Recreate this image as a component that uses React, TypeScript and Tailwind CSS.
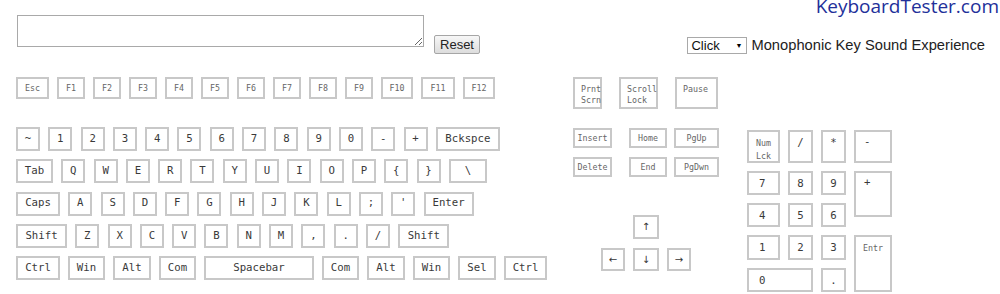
import type { ReactNode } from 'react'

/**
 * KeyboardTester page
 *
 * Text box with Reset, sound picker, and the full on-screen keyboard:
 * main block, navigation cluster and numeric keypad.
 */

type KeyDef = [string, string]

const mainText = "font-['DejaVu_Sans_Mono',monospace] text-[10.7px] text-[#3a3a3a]"
const smallText = "font-['DejaVu_Sans_Mono',monospace] text-[8.3px] text-[#666]"

const fRow: KeyDef[] = [
  ['Esc', 'w-[33px]'],
  ['F1', 'w-[28px]'],
  ['F2', 'w-[28px]'],
  ['F3', 'w-[28px]'],
  ['F4', 'w-[28px]'],
  ['F5', 'w-[28px]'],
  ['F6', 'w-[28px]'],
  ['F7', 'w-[28px]'],
  ['F8', 'w-[28px]'],
  ['F9', 'w-[28px]'],
  ['F10', 'w-[32px]'],
  ['F11', 'w-[34px]'],
  ['F12', 'w-[32px]'],
]

const single = (chars: string[]): KeyDef[] => chars.map((c) => [c, 'w-[24px]'])

const numberRow: KeyDef[] = [
  ...single(['~', '1', '2', '3', '4', '5', '6', '7', '8', '9', '0', '-', '+']),
  ['Bckspce', 'w-[64px]'],
]

const qwertyRow: KeyDef[] = [
  ['Tab', 'w-[37px]'],
  ...single(['Q', 'W', 'E', 'R', 'T', 'Y', 'U', 'I', 'O', 'P', '{', '}']),
  ['\\', 'w-[38px]'],
]

const homeRow: KeyDef[] = [
  ['Caps', 'w-[44px]'],
  ...single(['A', 'S', 'D', 'F', 'G', 'H', 'J', 'K', 'L', ';', "'"]),
  ['Enter', 'w-[50px]'],
]

const shiftRow: KeyDef[] = [
  ['Shift', 'w-[51px]'],
  ...single(['Z', 'X', 'C', 'V', 'B', 'N', 'M', ',', '.', '/']),
  ['Shift', 'w-[51px]'],
]

const bottomRow: KeyDef[] = [
  ['Ctrl', 'w-[44px]'],
  ['Win', 'w-[37px]'],
  ['Alt', 'w-[38px]'],
  ['Com', 'w-[37px]'],
  ['Spacebar', 'w-[110px]'],
  ['Com', 'w-[37px]'],
  ['Alt', 'w-[38px]'],
  ['Win', 'w-[37px]'],
  ['Sel', 'w-[38px]'],
  ['Ctrl', 'w-[43px]'],
]

function Key({ children, className }: { children: ReactNode; className: string }) {
  return (
    <div className={`flex shrink-0 border-2 border-[#c8c8c8] bg-white leading-none ${className}`}>
      {children}
    </div>
  )
}

function KeyRow({ keys, className, text }: { keys: KeyDef[]; className: string; text: string }) {
  return (
    <div className={`flex ${className}`}>
      {keys.map(([label, w], i) => (
        <Key key={i} className={`${w} h-full items-center justify-center ${text}`}>
          {label}
        </Key>
      ))}
    </div>
  )
}

function MainBlock() {
  return (
    <div className="flex flex-col">
      <KeyRow keys={fRow} className="h-[22px] gap-2" text={smallText} />
      <div className="mt-[28px] flex flex-col gap-y-[8.3px]">
        <KeyRow keys={numberRow} className="h-[24px] gap-x-[8.3px]" text={mainText} />
        <KeyRow keys={qwertyRow} className="h-[24px] gap-x-[8.3px]" text={mainText} />
        <KeyRow keys={homeRow} className="h-[24px] gap-x-[8.3px]" text={mainText} />
        <KeyRow keys={shiftRow} className="h-[24px] gap-x-[8.3px]" text={mainText} />
        <KeyRow keys={bottomRow} className="h-[24px] gap-2" text={mainText} />
      </div>
    </div>
  )
}

function NavBlock() {
  const arrow = "font-['DejaVu_Sans',sans-serif] text-[10px] text-[#333] items-center justify-center"
  return (
    <div className="ml-[26px] flex w-[146px] flex-col">
      {/* Print / Scroll / Pause */}
      <div className={`flex h-[32px] ${smallText}`}>
        <Key className="w-[29px] flex-col pl-[6px] pt-[5px]">
          <span className="leading-[11px]">Prnt</span>
          <span className="leading-[11px]">Scrn</span>
        </Key>
        <Key className="ml-[17px] w-[39px] flex-col pl-[6px] pt-[5px]">
          <span className="leading-[11px]">Scroll</span>
          <span className="leading-[11px]">Lock</span>
        </Key>
        <Key className="ml-[17px] w-[43px] pl-[6px] pt-[5px]">
          <span className="leading-[11px]">Pause</span>
        </Key>
      </div>

      {/* Insert / Home / PgUp and Delete / End / PgDwn */}
      <div className={`mt-[19px] flex h-[20px] ${smallText}`}>
        <Key className="w-[39px] items-center justify-center">Insert</Key>
        <Key className="ml-[17px] w-[38px] items-center justify-center">Home</Key>
        <Key className="ml-[7px] w-[45px] items-center justify-center">PgUp</Key>
      </div>
      <div className={`mt-[9px] flex h-[20px] ${smallText}`}>
        <Key className="w-[39px] items-center justify-center">Delete</Key>
        <Key className="ml-[17px] w-[38px] items-center justify-center">End</Key>
        <Key className="ml-[7px] w-[45px] items-center justify-center">PgDwn</Key>
      </div>

      {/* Arrows */}
      <div className="mt-[38px] flex flex-col items-center gap-[9px]">
        <Key className={`h-[24px] w-[26px] ${arrow}`}>↑</Key>
        <div className="flex h-[23px] gap-2">
          <Key className={`w-[24px] ${arrow}`}>←</Key>
          <Key className={`w-[26px] ${arrow}`}>↓</Key>
          <Key className={`w-[24px] ${arrow}`}>→</Key>
        </div>
      </div>
    </div>
  )
}

function NumPad() {
  const left = `pl-[10px] pt-[6px] ${mainText}`
  const center = `justify-center pt-[6px] ${mainText}`
  const corner = `pl-[8px] pt-[5px] ${mainText}`
  return (
    <div className="ml-[28px] mt-[53px] grid grid-cols-[33px_25px_25px_38px] grid-rows-[33px_24px_24px_25px_24px] gap-2">
      <Key className={`flex-col pl-[7px] pt-[5px] ${smallText}`}>
        <span className="leading-[13px]">Num</span>
        <span className="leading-[13px]">Lck</span>
      </Key>
      <Key className={center}>/</Key>
      <Key className={center}>*</Key>
      <Key className={corner}>-</Key>

      <Key className={left}>7</Key>
      <Key className={center}>8</Key>
      <Key className={center}>9</Key>
      <Key className={`row-span-2 h-[46px] self-start ${corner}`}>+</Key>

      <Key className={left}>4</Key>
      <Key className={center}>5</Key>
      <Key className={center}>6</Key>

      <Key className={left}>1</Key>
      <Key className={center}>2</Key>
      <Key className={center}>3</Key>
      <Key className={`row-span-2 pl-[7px] pt-[7px] ${smallText}`}>Entr</Key>

      <Key className={`col-span-2 ${left}`}>0</Key>
      <Key className={center}>.</Key>
    </div>
  )
}

export default function App() {
  return (
    <div className="h-[294px] w-[1000px] overflow-hidden bg-white">
      {/* Header */}
      <div className="flex h-[77px] items-start justify-between">
        <div className="flex items-start gap-[10px] pl-[17px] pt-[15px]">
          <textarea className="h-[32px] w-[407px] border border-[#a9a9a9] bg-white" />
          <button className="mt-[20px] h-[19px] w-[46px] rounded-[2px] border border-[#a6a6a6] bg-gradient-to-b from-[#f7f7f7] to-[#dddddd] font-['Liberation_Sans',Arial,sans-serif] text-[13px] leading-none text-[#222]">
            Reset
          </button>
        </div>
        <div className="flex flex-col items-end">
          <div className="-mt-[3px] pr-[1px] font-['Open_Sans',sans-serif] text-[19px] leading-[19px] text-[#22309a]">
            KeyboardTester.com
          </div>
          <div className="mr-[15px] mt-[21px] flex h-[17px] items-center gap-[4px]">
            <div className="relative h-[17px] w-[60px]">
              <select className="block h-full w-full appearance-none border border-[#a9a9a9] bg-white pl-[3px] font-['Liberation_Sans',Arial,sans-serif] text-[13px] leading-none text-[#111]">
                <option>Click</option>
              </select>
              <span className="pointer-events-none absolute right-[5px] top-[5px] text-[7px] leading-none text-black">▼</span>
            </div>
            <span className="font-['Liberation_Sans',Arial,sans-serif] text-[14.7px] leading-none text-[#222]">
              Monophonic Key Sound Experience
            </span>
          </div>
        </div>
      </div>

      {/* Keyboard */}
      <div className="flex items-start pl-[16px]">
        <MainBlock />
        <NavBlock />
        <NumPad />
      </div>
    </div>
  )
}
